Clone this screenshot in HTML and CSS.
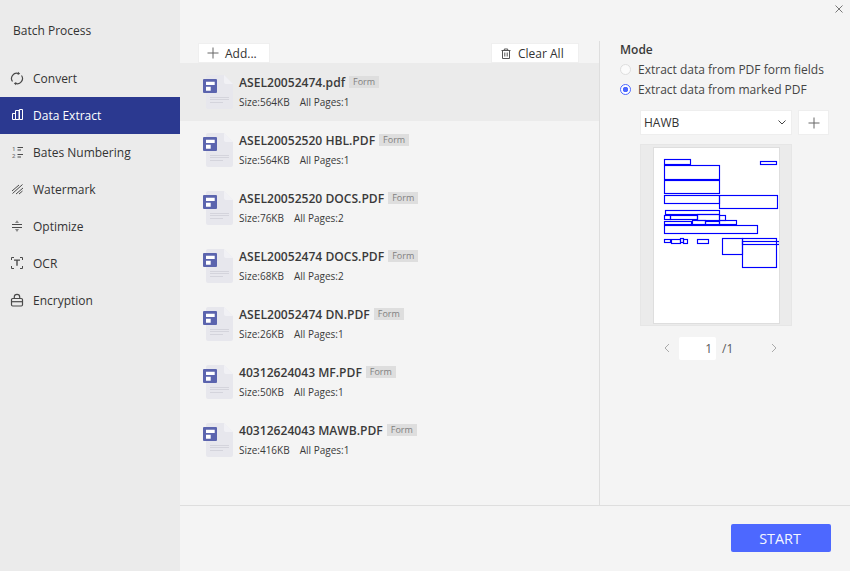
FILE: index.html
```html
<!DOCTYPE html>
<html lang="en">
<head>
<meta charset="utf-8">
<title>Batch Process</title>
<link rel="stylesheet" href="styles.css">
</head>
<body>
<svg class="defs" width="0" height="0" aria-hidden="true">
  <symbol id="file" viewBox="0 0 36 36">
    <path d="M3 2a2 2 0 0 1 2-2h16l9 9v23a2 2 0 0 1-2 2H5a2 2 0 0 1-2-2z" fill="#e7e7ed"/>
    <path d="M21 0l9 9h-7a2 2 0 0 1-2-2z" fill="#f1f1f5"/>
    <path d="M7 22.500h19M7 24.500h19M7 27.500h13" stroke="#d4d4dc" stroke-width="1" fill="none"/>
    <rect y="4" width="14" height="14" rx="1" fill="#5b64ae"/>
    <path d="M3 6.700h8.700V10H3zM3 11.700h4.700v4H3z" fill="#fff"/>
  </symbol>
</svg>
<div class="app">
  <aside class="sidebar">
    <h1 class="brand">Batch Process</h1>
    <nav class="nav">
      <a class="nav-item">
        <svg class="nav-icon" viewBox="0 0 14 14"><path d="M2.500 10.500A5.200 5.200 0 0 1 8.500 2.600M11.500 4.500A5.200 5.200 0 0 1 5.500 12.400" fill="none" stroke="currentColor" stroke-width="1.200"/><path d="M8 .8l2.200 2-2.500 1.200zM6 14.200l-2.200-2 2.500-1.200z" fill="currentColor"/></svg>
        <span>Convert</span>
      </a>
      <a class="nav-item active">
        <svg class="nav-icon" viewBox="0 0 14 14"><path d="M2.500 5.500h3v6h-3zM5.500 2.500h3.500v9H5.500zM9.500 1.500h3v10h-3z" fill="none" stroke="currentColor" stroke-width="1"/></svg>
        <span>Data Extract</span>
      </a>
      <a class="nav-item">
        <svg class="nav-icon" viewBox="0 0 14 14"><path d="M7.500 2.500H13M7.500 5H11M7.500 9.500H13M7.500 12H11" fill="none" stroke="currentColor" stroke-width="1"/><text class="bates-num" x="2" y="5.800">1</text><text class="bates-num" x="2" y="12.800">2</text></svg>
        <span>Bates Numbering</span>
      </a>
      <a class="nav-item">
        <svg class="nav-icon" viewBox="0 0 14 14"><path d="M2 9L9 3M2.500 11.500L12.500 2.500M6 12L13 6M9 12L12.500 9" fill="none" stroke="currentColor" stroke-width="1"/></svg>
        <span>Watermark</span>
      </a>
      <a class="nav-item">
        <svg class="nav-icon" viewBox="0 0 14 14"><path d="M2 5.500h10M2 8.500h10" fill="none" stroke="currentColor" stroke-width="1"/><path d="M7 1.200L9 4H5zM7 13l-2-3h4z" fill="#888"/></svg>
        <span>Optimize</span>
      </a>
      <a class="nav-item">
        <svg class="nav-icon" viewBox="0 0 14 14"><path d="M1.500 4V1.500H4M10 1.500h2.500V4M12.500 10v2.500H10M4 12.500H1.500V10" fill="none" stroke="currentColor" stroke-width="1"/><path d="M4 3.500h6v1.300H7.700v5H6.300v-5H4z" fill="currentColor"/></svg>
        <span>OCR</span>
      </a>
      <a class="nav-item">
        <svg class="nav-icon" viewBox="0 0 14 14"><rect x="1.500" y="5.500" width="11" height="7.500" rx="1.200" fill="none" stroke="currentColor" stroke-width="1.200"/><path d="M4.300 5.500V4a2.700 2.700 0 0 1 5.400 0v1.500" fill="none" stroke="currentColor" stroke-width="1.200"/><path d="M2 8.700h10" stroke="currentColor" stroke-width="1.200"/></svg>
        <span>Encryption</span>
      </a>
    </nav>
  </aside>
  <main class="main">
    <div class="topbar">
      <svg class="close" viewBox="0 0 8 8"><path d="M.5.500l7 7M7.500.500l-7 7" stroke="#777" stroke-width="1" fill="none"/></svg>
    </div>
    <div class="content">
      <section class="files">
        <div class="toolbar">
          <button class="tool-btn add">
            <svg class="tool-icon" viewBox="0 0 12 12"><path d="M6 .5v11M.5 6h11" stroke="#666" stroke-width="1" fill="none"/></svg>
            Add...
          </button>
          <button class="tool-btn clear">
            <svg class="trash-icon" viewBox="0 0 10 11"><path d="M.5 2.500h9M3.300 2.500V1h3.400v1.500M1.500 2.500v8h7v-8M3.800 4.500v4M6.200 4.500v4" stroke="#555" stroke-width="1" fill="none"/></svg>
            Clear All
          </button>
        </div>
        <ul class="file-list">
          <li class="file selected">
            <svg class="file-icon"><use href="#file"/></svg>
            <div class="file-body">
              <div class="file-title"><span class="file-name">ASEL20052474.pdf</span><span class="tag">Form</span></div>
              <div class="file-meta"><span>Size:564KB</span><span>All Pages:1</span></div>
            </div>
          </li>
          <li class="file">
            <svg class="file-icon"><use href="#file"/></svg>
            <div class="file-body">
              <div class="file-title"><span class="file-name">ASEL20052520 HBL.PDF</span><span class="tag">Form</span></div>
              <div class="file-meta"><span>Size:564KB</span><span>All Pages:1</span></div>
            </div>
          </li>
          <li class="file">
            <svg class="file-icon"><use href="#file"/></svg>
            <div class="file-body">
              <div class="file-title"><span class="file-name">ASEL20052520 DOCS.PDF</span><span class="tag">Form</span></div>
              <div class="file-meta"><span>Size:76KB</span><span>All Pages:2</span></div>
            </div>
          </li>
          <li class="file">
            <svg class="file-icon"><use href="#file"/></svg>
            <div class="file-body">
              <div class="file-title"><span class="file-name">ASEL20052474 DOCS.PDF</span><span class="tag">Form</span></div>
              <div class="file-meta"><span>Size:68KB</span><span>All Pages:2</span></div>
            </div>
          </li>
          <li class="file">
            <svg class="file-icon"><use href="#file"/></svg>
            <div class="file-body">
              <div class="file-title"><span class="file-name">ASEL20052474 DN.PDF</span><span class="tag">Form</span></div>
              <div class="file-meta"><span>Size:26KB</span><span>All Pages:1</span></div>
            </div>
          </li>
          <li class="file">
            <svg class="file-icon"><use href="#file"/></svg>
            <div class="file-body">
              <div class="file-title"><span class="file-name">40312624043 MF.PDF</span><span class="tag">Form</span></div>
              <div class="file-meta"><span>Size:50KB</span><span>All Pages:1</span></div>
            </div>
          </li>
          <li class="file">
            <svg class="file-icon"><use href="#file"/></svg>
            <div class="file-body">
              <div class="file-title"><span class="file-name">40312624043 MAWB.PDF</span><span class="tag">Form</span></div>
              <div class="file-meta"><span>Size:416KB</span><span>All Pages:1</span></div>
            </div>
          </li>
        </ul>
      </section>
      <section class="panel">
        <h2 class="panel-title">Mode</h2>
        <label class="radio-row"><span class="radio"></span>Extract data from PDF form fields</label>
        <label class="radio-row"><span class="radio checked"></span>Extract data from marked PDF</label>
        <div class="select-row">
          <div class="select">
            <span>HAWB</span>
            <svg class="chev" viewBox="0 0 8 5"><path d="M.5.500L4 4 7.500.500" stroke="#444" stroke-width="1" fill="none"/></svg>
          </div>
          <button class="plus-btn"><svg class="tool-icon" viewBox="0 0 12 12"><path d="M6 .5v11M.5 6h11" stroke="#666" stroke-width="1" fill="none"/></svg></button>
        </div>
        <div class="preview">
          <div class="paper">
            <svg class="marks" viewBox="654 148 125 175" width="125" height="175">
              <g fill="none" stroke="#0000ff" stroke-width="1.150">
                <rect x="664.500" y="159.500" width="26" height="5"/>
                <rect x="760.500" y="161.500" width="16" height="3"/>
                <rect x="664.500" y="165.500" width="55" height="14"/>
                <rect x="664.500" y="180.500" width="55" height="13"/>
                <rect x="664.500" y="195.500" width="55" height="8"/>
                <rect x="719.500" y="195.500" width="58" height="13"/>
                <rect x="665.500" y="210.500" width="54" height="4"/>
                <rect x="664.500" y="215.500" width="6" height="4"/>
                <rect x="670.500" y="215.500" width="27" height="4"/>
                <rect x="697.500" y="214.500" width="22" height="6"/>
                <rect x="719.500" y="215.500" width="6" height="5"/>
                <rect x="664.500" y="221.500" width="27" height="3"/>
                <rect x="692.500" y="220.500" width="13" height="4"/>
                <rect x="705.500" y="221.500" width="14" height="3"/>
                <rect x="719.500" y="220.500" width="17" height="4"/>
                <rect x="664.500" y="225.500" width="93" height="8"/>
                <rect x="664.500" y="239.500" width="6" height="3"/>
                <rect x="671.500" y="239.500" width="9" height="4"/>
                <rect x="680.500" y="238.500" width="3" height="4"/>
                <rect x="683.500" y="239.500" width="4" height="4"/>
                <rect x="697.500" y="239.500" width="11" height="4"/>
                <rect x="722.500" y="238.500" width="20" height="16"/>
                <rect x="742.500" y="238.500" width="34" height="29"/>
                <rect x="742.500" y="241.500" width="37" height="3"/>
              </g>
            </svg>
          </div>
        </div>
        <div class="pager">
          <svg class="pager-arrow" viewBox="0 0 6 10"><path d="M5 1L1 5l4 4" stroke="#aaa" stroke-width="1" fill="none"/></svg>
          <span class="page-input">1</span>
          <span class="page-total">/1</span>
          <svg class="pager-arrow next" viewBox="0 0 6 10"><path d="M1 1l4 4-4 4" stroke="#aaa" stroke-width="1" fill="none"/></svg>
        </div>
      </section>
    </div>
    <footer class="footer">
      <button class="start">START</button>
    </footer>
  </main>
</div>
</body>
</html>
```
FILE: styles.css
```css
* { box-sizing: border-box; }
html, body { margin: 0; padding: 0; }
body {
  width: 850px;
  height: 571px;
  overflow: hidden;
  font-family: "Open Sans", "Noto Sans", sans-serif;
  font-size: 12px;
  color: #333;
  background: #f4f4f4;
}
.defs { position: absolute; }
.app { display: flex; width: 850px; height: 571px; }

.sidebar { width: 180px; flex: none; background: #ebebeb; }
.brand {
  margin: 0;
  padding: 22px 0 0 13px;
  height: 60px;
  font-size: 12px;
  font-weight: 400;
  line-height: 17px;
  color: #333;
}
.nav { display: flex; flex-direction: column; }
.nav-item {
  display: flex;
  align-items: center;
  gap: 9px;
  height: 37px;
  padding-left: 10px;
  color: #4a4a4a;
}
.nav-item.active { background: #2b3990; color: #fff; }
.nav-icon { width: 14px; height: 14px; margin-top: -1px; flex: none; overflow: visible; }
.bates-num { font-size: 6px; font-weight: 600; fill: #777; }
.nav-item span { color: #333; }
.nav-item.active span { color: #fff; }

.main { flex: 1; display: flex; flex-direction: column; min-width: 0; }
.topbar { height: 41px; display: flex; justify-content: flex-end; padding: 5px 7px 0 0; flex: none; }
.close { width: 8px; height: 8px; }
.content { flex: 1; display: flex; min-height: 0; }

.files { width: 420px; flex: none; display: flex; flex-direction: column; border-right: 1px solid #dedede; }
.toolbar { display: flex; justify-content: space-between; padding: 2px 20px 0 18px; height: 22px; flex: none; }
.tool-btn {
  display: flex;
  align-items: center;
  height: 20px;
  padding: 0;
  border: 1px solid #efefef;
  background: #fff;
  font: inherit;
  color: #333;
}
.add { width: 72px; padding-left: 8px; gap: 6px; }
.clear { width: 88px; padding-left: 9px; gap: 7px; }
.tool-icon { width: 12px; height: 12px; flex: none; }
.trash-icon { width: 10px; height: 11px; flex: none; }
.file-list { list-style: none; margin: 0; padding: 0; }
.file { display: flex; height: 58px; padding-left: 23px; }
.file.selected { background: #ebebeb; }
.file-icon { width: 36px; height: 36px; margin-top: 12px; flex: none; }
.file-body { padding-top: 9px; }
.file-title { display: flex; align-items: center; gap: 4px; height: 20px; }
.file-name { font-weight: 600; font-size: 12.100px; color: #3a3a3a; }
.tag {
  display: block;
  width: 30px;
  height: 12px;
  background: #dedede;
  font-size: 9px;
  line-height: 12px;
  text-align: center;
  color: #808080;
}
.file-meta { display: flex; gap: 10px; margin-top: 2px; font-size: 10px; line-height: 16px; color: #3a3a3a; }

.panel { flex: 1; padding: 0 0 0 20px; }
.panel-title { margin: 0; font-size: 12px; font-weight: 600; line-height: 18px; color: #3a3a3a; }
.radio-row { display: flex; align-items: center; gap: 7px; height: 20px; color: #444; }
.radio {
  width: 11px;
  height: 11px;
  flex: none;
  border: 1px solid #dedede;
  border-radius: 50%;
  background: #fbfbfb;
}
.radio.checked { border-color: #4d68ff; background: radial-gradient(circle, #4d68ff 0 2.500px, #fff 3px); }
.select-row { display: flex; gap: 6px; margin: 11px 0 0 20px; }
.select {
  display: flex;
  align-items: center;
  justify-content: space-between;
  width: 152px;
  height: 25px;
  padding: 0 5px 0 3px;
  background: #fff;
  border: 1px solid #eee;
  color: #333;
}
.chev { width: 8px; height: 5px; }
.plus-btn {
  display: flex;
  align-items: center;
  justify-content: center;
  width: 31px;
  height: 25px;
  padding: 0;
  background: #fff;
  border: 1px solid #eee;
}
.preview {
  width: 152px;
  height: 182px;
  margin: 9px 0 0 20px;
  padding: 3px 13px 0 13px;
  background: #ebebeb;
  border: 1px solid #e6e6e6;
}
.paper { width: 125px; height: 175px; background: #fff; box-shadow: 0 0 0 1px #dedede; }
.marks { display: block; }
.pager { display: flex; align-items: center; height: 24px; margin: 10px 0 0 44px; }
.pager-arrow { width: 6px; height: 10px; flex: none; }
.pager-arrow.next { margin-left: 33px; }
.page-input {
  width: 37px;
  height: 23px;
  margin-left: 9px;
  padding-right: 4px;
  background: #fff;
  border-radius: 2px;
  line-height: 23px;
  text-align: right;
  color: #5a5a5a;
}
.page-total { margin-left: 6px; color: #5a5a5a; width: 16px; }

.footer { height: 66px; flex: none; display: flex; justify-content: flex-end; align-items: flex-start; padding: 18px 19px 0 0; border-top: 1px solid #dedede; }
.start {
  width: 100px;
  height: 28px;
  padding: 0 2px 0 0;
  border: 0;
  border-radius: 2px;
  background: #4d68ff;
  color: #f4f6ff;
  font: inherit;
  font-size: 14.400px;
}
```
